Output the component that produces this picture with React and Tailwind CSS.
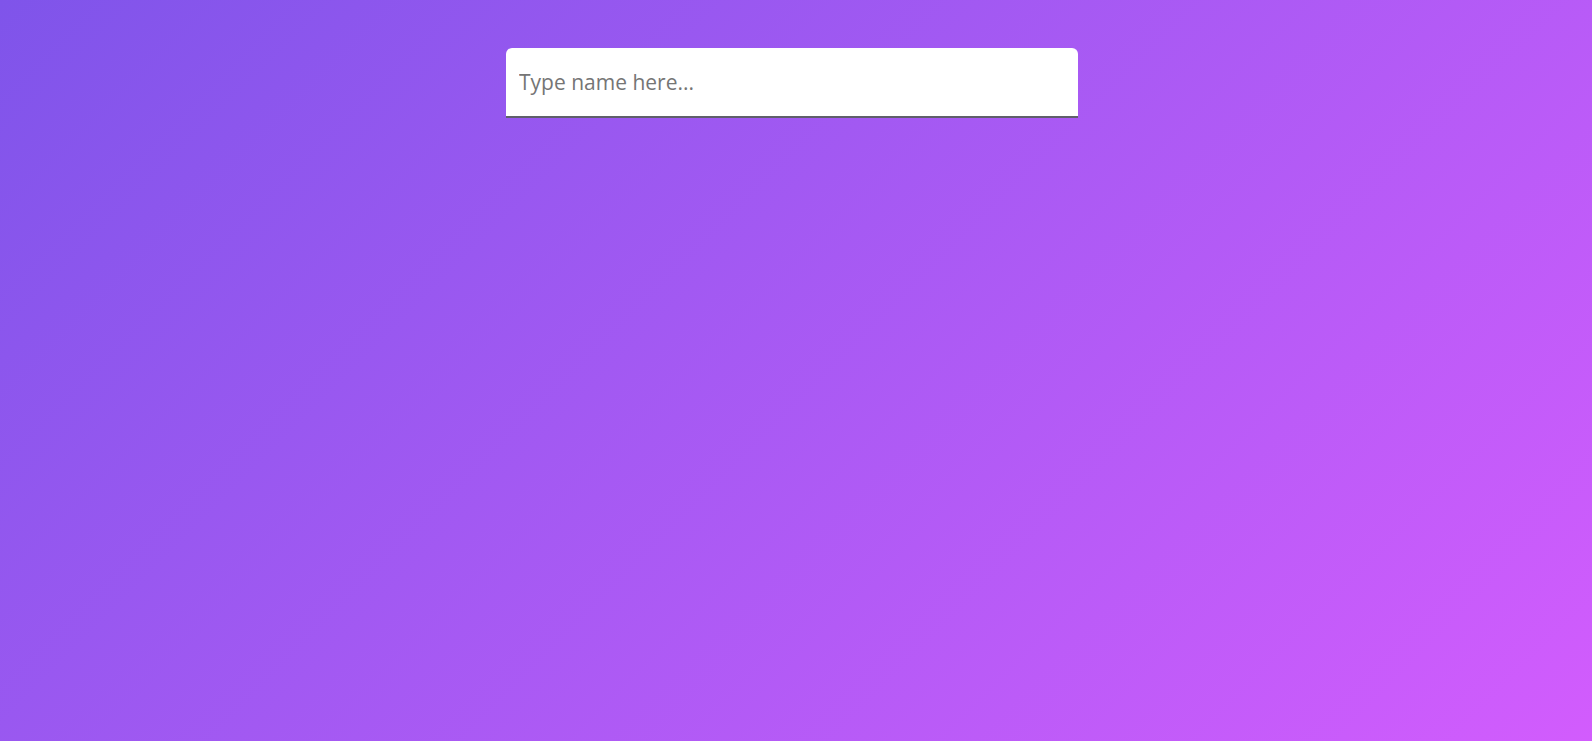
import React from 'react';

export default function App() {
  return (
    <div className="min-h-screen w-full bg-linear-135 from-[#7f54ea] to-[#d25cfd] flex justify-center pt-[48px] pr-[8px]">
      <input
        type="text"
        placeholder="Type name here..."
        className="w-[572px] h-[70px] bg-white rounded-t-[6px] border-b-2 border-[#5f5f6a] px-[13px] text-[21px] text-[#333] placeholder:text-[#757575] outline-none"
        style={{ fontFamily: '"Open Sans", "Noto Sans", sans-serif' }}
      />
    </div>
  );
}
